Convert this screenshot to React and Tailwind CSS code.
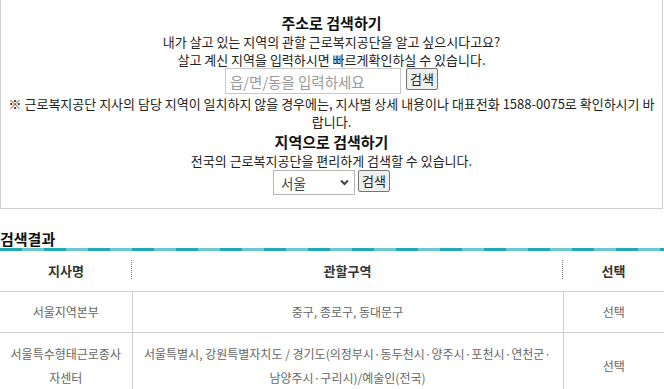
import React, { useState } from "react";

const rows = [
  { name: ["서울지역본부"], area: ["중구, 종로구, 동대문구"], tall: false },
  {
    name: ["서울특수형태근로종사", "자센터"],
    area: [
      "서울특별시, 강원특별자치도 / 경기도(의정부시·동두천시·양주시·포천시·연천군·",
      "남양주시·구리시)/예술인(전국)",
    ],
    tall: true,
  },
];

const App = () => {
  const [dong, setDong] = useState("");
  const [region, setRegion] = useState("서울");

  return (
    <div className="w-[664px] bg-white text-[#222] font-['Noto_Sans_CJK_KR','Noto_Sans',sans-serif]">
      {/* 검색 박스 */}
      <div className="border-x border-b border-[#cfcfcf] pt-[13px] pb-[13px] text-center text-[13px] leading-[18px] w-[663px]">
        <h2 className="text-[15px] font-bold leading-[20px] text-[#111]">주소로 검색하기</h2>
        <p>내가 살고 있는 지역의 관할 근로복지공단을 알고 싶으시다고요?</p>
        <p>살고 계신 지역을 입력하시면 빠르게확인하실 수 있습니다.</p>
        <div className="flex justify-center items-start gap-[5px] mt-[-1px]">
          <input
            type="text"
            value={dong}
            onChange={(e) => setDong(e.target.value)}
            placeholder="읍/면/동을 입력하세요"
            className="w-[176px] h-[26px] border border-[#c8c8c8] px-[4px] text-[14.5px] placeholder:text-[#9a9a9a] outline-none"
          />
          <button className="h-[22px] px-[3px] border border-[#767676] rounded-[2px] bg-[#efefef] text-[13px] leading-[18px]">
            검색
          </button>
        </div>
        <p className="mt-[1px] px-[1px]">
          ※ 근로복지공단 지사의 담당 지역이 일치하지 않을 경우에는, 지사별 상세 내용이나 대표전화 1588-0075로 확인하시기 바
          <br />
          랍니다.
        </p>
        <h2 className="text-[15px] font-bold leading-[21px] text-[#111]">지역으로 검색하기</h2>
        <p>전국의 근로복지공단을 편리하게 검색할 수 있습니다.</p>
        <div className="flex justify-center items-start gap-[3px]">
          <div className="relative w-[82px] h-[25px] border border-[#b5b5b5]">
            <select
              value={region}
              onChange={(e) => setRegion(e.target.value)}
              className="appearance-none w-full h-full pl-[7px] text-[13.5px] text-[#444] bg-white outline-none"
            >
              <option>서울</option>
              <option>부산</option>
              <option>대구</option>
              <option>인천</option>
            </select>
            <svg
              className="absolute right-[5px] top-[8px] pointer-events-none"
              width="9"
              height="7"
              viewBox="0 0 9 7"
            >
              <path d="M1 1.5l3.5 3.5L8 1.5" fill="none" stroke="#444" strokeWidth="2" />
            </svg>
          </div>
          <button className="h-[22px] px-[3px] border border-[#767676] rounded-[2px] bg-[#efefef] text-[13px] leading-[18px]">
            검색
          </button>
        </div>
      </div>

      {/* 검색결과 */}
      <h3 className="mt-[21px] text-[15px] font-bold leading-[18px] text-[#111]">검색결과</h3>
      <div className="h-[3px] bg-[repeating-linear-gradient(90deg,#1fa9b7_0px,#1fa9b7_22px,#6cc7d0_22px,#6cc7d0_44px)]" />

      <table className="w-full border-collapse text-center table-fixed">
        <colgroup>
          <col className="w-[132px]" />
          <col className="w-[431px]" />
          <col />
        </colgroup>
        <thead>
          <tr className="h-[40px] border-b border-[#cfcfcf] text-[13px] font-bold text-[#333]">
            <th className="relative font-bold">
              지사명
              <span className="absolute right-0 top-[9px] h-[19px] border-r border-dotted border-[#888]" />
            </th>
            <th className="relative font-bold">
              관할구역
              <span className="absolute right-0 top-[9px] h-[19px] border-r border-dotted border-[#888]" />
            </th>
            <th className="font-bold">선택</th>
          </tr>
        </thead>
        <tbody className="text-[12px] text-[#666]">
          {rows.map((r) => (
            <tr key={r.name[0]} className="border-b border-[#cfcfcf]">
              <td className={`px-[4px] leading-[24px] ${r.tall ? "py-[9px]" : "py-[8px]"}`}>
                {r.name.map((n, i) => (
                  <div key={i} className="whitespace-nowrap">{n}</div>
                ))}
              </td>
              <td className="border-x border-[#cfcfcf] px-[4px] leading-[24px]">
                {r.area.map((a, i) => (
                  <div key={i} className="whitespace-nowrap">{a}</div>
                ))}
              </td>
              <td className="leading-[24px]">선택</td>
            </tr>
          ))}
        </tbody>
      </table>
    </div>
  );
};

export default App;
